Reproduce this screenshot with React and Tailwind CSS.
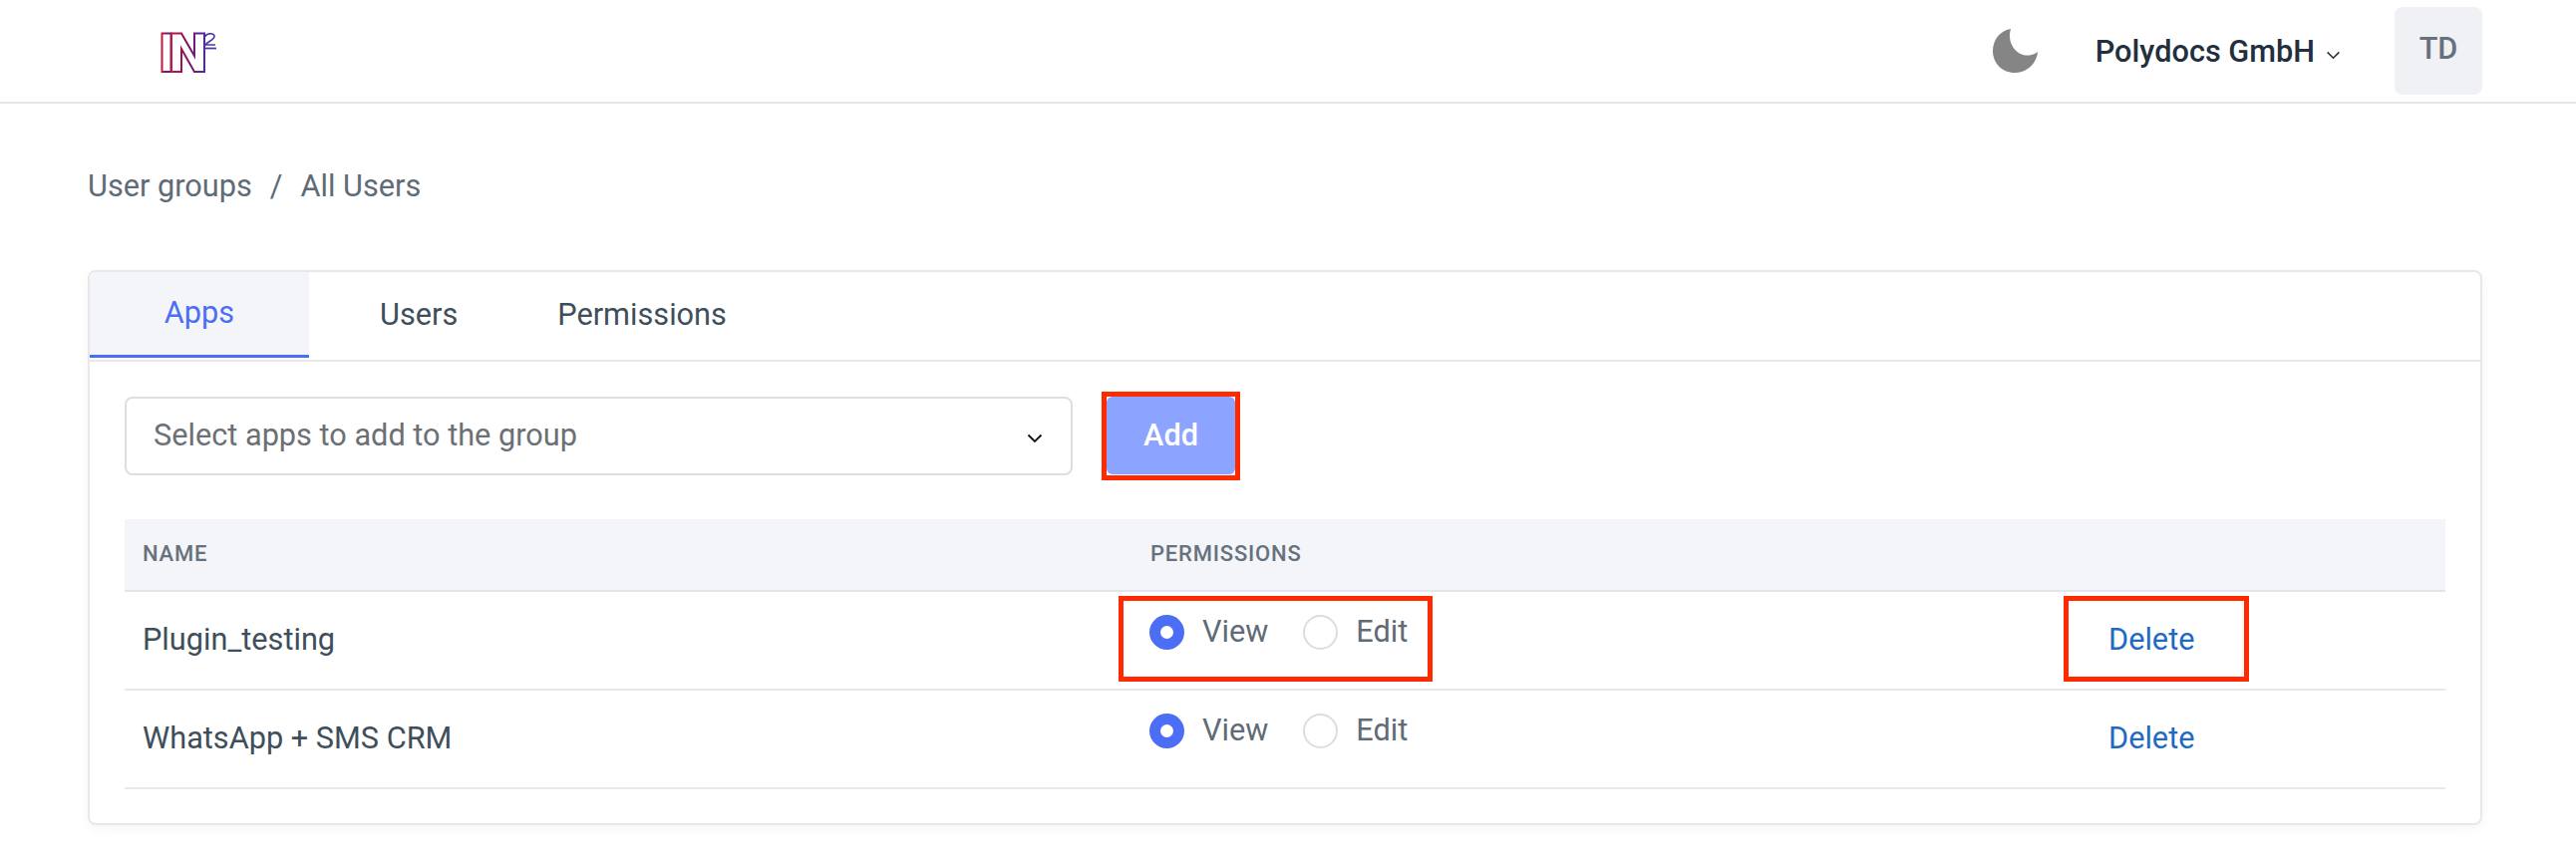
const rows = ["Plugin_testing", "WhatsApp + SMS CRM"];

const Logo = () => (
  <svg className="mt-[4px]" width="58" height="42" viewBox="0 0 58 42" fill="none">
    <defs>
      <linearGradient id="logoGrad" x1="0" y1="0" x2="1" y2="0">
        <stop offset="0" stopColor="#c8173c" />
        <stop offset="0.45" stopColor="#8c0f5c" />
        <stop offset="1" stopColor="#4b2e9c" />
      </linearGradient>
    </defs>
    <g stroke="url(#logoGrad)" strokeWidth="2">
      <path d="M1.500 1.500H10.500V40H1.500Z" />
      <path d="M11 40V1.500H21L34 24V1.500H44V40H34L21 17V40Z" />
    </g>
    <path d="M45 5C45.500 1.500 53 0.500 54 4C55 7.500 47.500 9.500 45 13H55" stroke="#4b3aa8" strokeWidth="1.6" />
    <path d="M44 16.500H56" stroke="#4b3aa8" strokeWidth="1.8" />
  </svg>
);

const Moon = () => (
  <svg width="45" height="44" viewBox="0 0 45 44">
    <path d="M18 0C6 2 0 12 0 22C0 35 10 44 22 44C34 44 44 35 45 23C41 26 36 27 32 26.500C22 25 14 13 18 0Z" fill="#858585" />
  </svg>
);

const Chevron = ({ className }) => (
  <svg className={className} viewBox="0 0 16 10" fill="none" stroke="currentColor" strokeWidth="1.8">
    <path d="M1.500 1.500L8 8L14.500 1.500" />
  </svg>
);

const RedBox = ({ className }) => (
  <div className={`absolute border-[5px] border-[#ff2a00] pointer-events-none ${className}`} />
);

const Radio = ({ checked, label }) => (
  <div className="flex items-center gap-[18px]">
    {checked ? (
      <span className="flex items-center justify-center w-[35px] h-[35px] rounded-full bg-[#4c6ef5]">
        <span className="w-[13px] h-[13px] rounded-full bg-white" />
      </span>
    ) : (
      <span className="w-[35px] h-[35px] rounded-full border-2 border-[#dddddd] bg-white" />
    )}
    <span className="text-[#5f6b76]">{label}</span>
  </div>
);

export default function App() {
  return (
    <div className="min-h-[864px] bg-white text-[30.7px] font-['Roboto',sans-serif]">
      <header className="flex items-center justify-between h-[104px] border-b-2 border-[#e6e6e6] pl-[161px] pr-[94px]">
        <Logo />
        <div className="flex items-center">
          <Moon />
          <div className="flex items-center ml-[58px] text-[#232f3e] font-medium pt-[2px]">
            Polydocs GmbH
            <Chevron className="w-[15px] h-[9px] ml-[11px] mt-[8px] text-[#333]" />
          </div>
          <div className="flex items-center justify-center w-[88px] h-[88px] ml-[54px] rounded-lg bg-[#f0f1f5] text-[#67717d] font-medium pb-[4px]">
            TD
          </div>
        </div>
      </header>

      <main className="pl-[88px] pr-[94px]">
        <div className="flex items-center h-[60px] mt-[53px] text-[#5f6b76]">
          <span>User groups</span>
          <span className="mx-[18px]">/</span>
          <span>All Users</span>
        </div>

        <section className="mt-[54px] h-[557px] rounded-lg border-2 border-[#e8e8e8] shadow-[0_4px_12px_rgba(0,0,0,0.04)]">
          <div className="flex h-[90px] border-b-2 border-[#e8e8ec] pb-[2px]">
            <div className="flex items-center justify-center w-[220px] bg-[#f4f5f9] border-b-[3px] border-[#4c6ef5] text-[#4c6ef5] rounded-tl-lg">
              Apps
            </div>
            <div className="flex items-center ml-[71px] text-[#3e4e5a]">Users</div>
            <div className="flex items-center ml-[100px] text-[#3e4e5a]">Permissions</div>
          </div>

          <div className="px-[35px] pt-[35px]">
            <div className="flex">
              <div className="flex items-center justify-between w-[951px] h-[79px] rounded-lg border-2 border-[#dedede] pl-[27px] pr-[28px]">
                <span className="text-[#6c7075]">Select apps to add to the group</span>
                <Chevron className="w-[16px] h-[10px] mt-[4px] text-[#111]" />
              </div>
              <div className="relative ml-[34px]">
                <button className="w-[129px] h-[78px] rounded-md bg-[#8ca3ff] text-white font-medium">Add</button>
                <RedBox className="-inset-[5px]" />
              </div>
            </div>

            <div className="mt-[44px]">
              <div className="grid grid-cols-[1011px_962px_1fr] items-center h-[73px] bg-[#f4f5f9] border-b-2 border-[#e4e5e8] text-[22px] font-medium tracking-[0.8px] text-[#67717d] pb-[3px]">
                <div className="pl-[18px]">NAME</div>
                <div className="pl-[18px]">PERMISSIONS</div>
                <div />
              </div>
              {rows.map((name, i) => (
                <div key={name} className="grid grid-cols-[1011px_962px_1fr] items-center h-[99px] border-b-2 border-[#e8e8e8]">
                  <div className="pl-[18px] text-[#3e4e5a]">{name}</div>
                  <div className="relative h-full">
                    <div className="flex items-center gap-[35px] pl-[17px] pt-[17px]">
                      <Radio checked label="View" />
                      <Radio label="Edit" />
                    </div>
                    {i === 0 && <RedBox className="left-[-14px] w-[315px] top-[4px] h-[86px]" />}
                  </div>
                  <div className="relative h-full flex items-center pl-[17px] text-[#1f6ac2]">
                    Delete
                    {i === 0 && <RedBox className="left-[-28px] w-[186px] top-[4px] h-[86px]" />}
                  </div>
                </div>
              ))}
            </div>
          </div>
        </section>
      </main>
    </div>
  );
}
